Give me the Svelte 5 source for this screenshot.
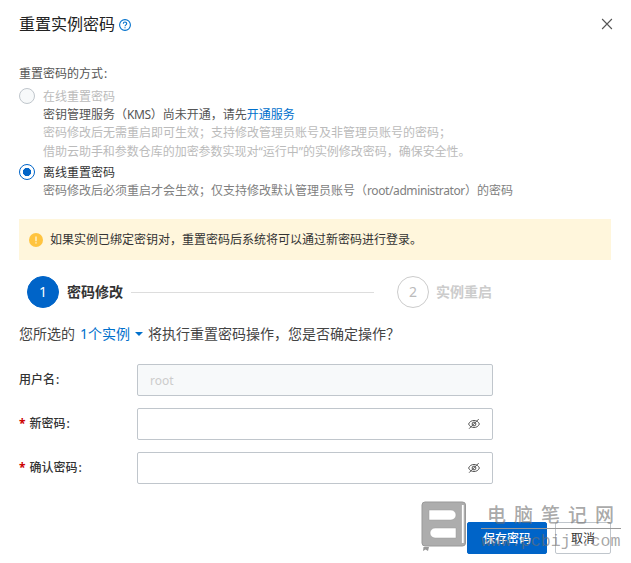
<script lang="ts">
    let mode = 'offline';
    let username = 'root';
    let password = '';
    let confirmPassword = '';
</script>

<main class="dialog">
    <header>
        <h1>重置实例密码</h1>
        <svg class="help" viewBox="0 0 12 12" width="12" height="12">
            <circle cx="6" cy="6" r="5.4" />
            <path d="M4.3 4.8C4.3 2.5 7.7 2.5 7.7 4.7C7.7 5.9 6 5.9 6 7.3M6 8.3V9.3" />
        </svg>
        <svg class="close" viewBox="0 0 12 12" width="12" height="12">
            <path d="M1.1 1L10.9 11M10.9 1L1.1 11" />
        </svg>
    </header>

    <section class="methods">
        <div class="caption">重置密码的方式<span class="colon">:</span></div>
        <div class="method">
            <span class="radio disabled"></span>
            <div class="method-text">
                <div class="muted">在线重置密码</div>
                <div>密钥管理服务（<span class="latin">KMS</span>）尚未开通，请先<span class="link">开通服务</span></div>
                <div class="muted">密码修改后无需重启即可生效；支持修改管理员账号及非管理员账号的密码；</div>
                <div class="muted quoted">借助云助手和参数仓库的加密参数实现对“运行中”的实例修改密码，确保安全性。</div>
            </div>
        </div>
        <div class="method offline">
            <span class="radio" class:checked={mode === 'offline'}></span>
            <div class="method-text">
                <div class="label">离线重置密码</div>
                <div class="hint">密码修改后必须重启才会生效；仅支持修改默认管理员账号（<span class="latin">root/administrator</span>）的密码</div>
            </div>
        </div>
    </section>

    <div class="notice">
        <svg viewBox="0 0 14 14" width="14" height="14">
            <circle cx="7" cy="7" r="7" fill="#ffc440" />
            <path d="M7 3.4V8.2M7 9.3V10.6" stroke="#fff6dc" stroke-width="1.3" />
        </svg>
        <span>如果实例已绑定密钥对，重置密码后系统将可以通过新密码进行登录。</span>
    </div>

    <div class="steps">
        <span class="number active">1</span>
        <span class="step-title">密码修改</span>
        <span class="step-line"></span>
        <span class="number">2</span>
        <span class="step-title waiting">实例重启</span>
    </div>

    <div class="question">
        <span>您所选的</span>
        <span class="link instances">1个实例</span>
        <span class="arrow"></span>
        <span>将执行重置密码操作，您是否确定操作？</span>
    </div>

    <form>
        <div class="field">
            <span class="field-label">用户名<span class="colon">:</span></span>
            <div class="control readonly"><input value={username} disabled /></div>
        </div>
        <div class="field">
            <span class="field-label"><span class="required">*</span>新密码<span class="colon">:</span></span>
            <div class="control">
                <input type="password" bind:value={password} />
                {@render eye()}
            </div>
        </div>
        <div class="field">
            <span class="field-label"><span class="required">*</span>确认密码<span class="colon">:</span></span>
            <div class="control">
                <input type="password" bind:value={confirmPassword} />
                {@render eye()}
            </div>
        </div>
    </form>

    <footer>
        <button class="primary">保存密码</button>
        <button>取消</button>
    </footer>

    <div class="watermark">
        <svg viewBox="0 0 46 51" width="46" height="51">
            <rect x="1" y="1" width="43.5" height="44" rx="3" fill="#adadad" stroke="#999" />
            <path d="M8 9H30A5 5 0 0 1 30 19H8ZM35 27V37H14A5 5 0 0 1 14 27Z" fill="#fff" stroke="#999" stroke-width=".5" />
            <path d="M41.8 4V42" stroke="#fff" stroke-width="1.8" />
            <path d="M2.5 46H8L7 50L4.5 48.5L2 50Z" fill="#999" />
        </svg>
        <div class="watermark-text">
            <div class="site-name">电脑笔记网</div>
            <div class="site-url">www.pcbiji.com</div>
        </div>
    </div>
</main>

{#snippet eye()}
    <svg class="eye" viewBox="0 0 12 12" width="12" height="12">
        <path d="M.6 6C2.4 1.3 9.6 1.3 11.4 6C9.6 10.7 2.4 10.7 .6 6Z" />
        <circle cx="6" cy="6" r="1.9" />
        <path d="M1.1 10.7L10.7 1.1" />
    </svg>
{/snippet}

<style>
    :global(body) {
        margin: 0;
        background: #fff;
    }

    .dialog {
        position: relative;
        box-sizing: border-box;
        width: 631px;
        height: 563px;
        padding: 12px 20px 0 19px;
        overflow: hidden;
        color: #555;
        font: 12px/18px "Noto Sans", "Noto Sans CJK SC", sans-serif;
    }

    header {
        display: flex;
        align-items: center;
        height: 24px;
    }

    h1 {
        margin: 0 4px 0 0;
        color: #222;
        font-size: 16px;
        font-weight: 400;
        line-height: 24px;
    }

    .help, .close, .eye {
        fill: none;
        stroke: #555;
    }

    .help {
        margin-top: 2px;
        stroke: #0070cc;
        stroke-width: 1.1;
    }

    .close {
        margin-left: auto;
        margin-right: -2px;
        stroke-width: 1.1;
    }

    .methods {
        margin-top: 29px;
    }

    .caption {
        height: 23px;
    }

    .method {
        display: flex;
        gap: 8px;
    }

    .method-text {
        white-space: nowrap;
        line-height: 18.2px;
    }

    .latin {
        letter-spacing: -.4px;
    }

    .quoted {
        letter-spacing: -.03px;
    }

    .offline {
        margin-top: 3px;
    }

    .radio {
        box-sizing: border-box;
        width: 16px;
        height: 16px;
        border: 1px solid #c0c6cc;
        border-radius: 50%;
        background: #fff;
    }

    .radio.disabled {
        background: #f7f9fa;
    }

    .radio.checked {
        border-color: #0064c8;
        background: radial-gradient(circle, #0064c8 3.8px, #fff 4.4px);
    }

    .muted {
        color: #bbb;
    }

    .hint {
        color: #808080;
    }

    .label {
        color: #333;
    }

    .link {
        color: #0070cc;
    }

    .notice {
        display: flex;
        align-items: center;
        gap: 7px;
        box-sizing: border-box;
        width: 592px;
        height: 41px;
        margin-top: 19px;
        padding-left: 10px;
        background: #fff6dc;
        color: #333;
    }

    .steps {
        display: flex;
        align-items: center;
        height: 32px;
        margin: 16px 0 0 8px;
    }

    .number {
        box-sizing: border-box;
        width: 32px;
        height: 32px;
        border: 1px solid #ccc;
        border-radius: 50%;
        color: #bbb;
        font-size: 14px;
        line-height: 30px;
        text-align: center;
    }

    .number.active {
        border-color: #0064c8;
        background: #0064c8;
        color: #fff;
    }

    .step-title {
        margin-left: 8px;
        color: #333;
        font-size: 14px;
        font-weight: 700;
    }

    .step-title.waiting {
        margin-left: 7px;
        color: #ccc;
    }

    .step-line {
        width: 243px;
        height: 1px;
        margin: 1px 23px 0 8px;
        background: #ddd;
    }

    .question {
        display: flex;
        align-items: center;
        height: 20px;
        margin-top: 16px;
        color: #444;
        font-size: 14px;
        white-space: nowrap;
    }

    .instances {
        margin: 0 5px;
    }

    .arrow {
        margin-right: 5px;
        border: 4px solid transparent;
        border-top: 4px solid #0070cc;
        border-bottom: 0;
    }

    form {
        display: grid;
        gap: 12px;
        margin-top: 20px;
    }

    .field {
        display: flex;
    }

    .field-label {
        width: 118px;
        color: #333;
        font-weight: 500;
        line-height: 32px;
    }

    .colon {
        margin-left: 1px;
    }

    .required {
        margin-right: 4px;
        color: #c00;
        font-weight: 700;
    }

    .control {
        display: flex;
        align-items: center;
        box-sizing: border-box;
        width: 356px;
        height: 32px;
        padding: 0 12px;
        border: 1px solid #c0c6cc;
        border-radius: 2px;
    }

    .readonly {
        background: #f7f9fa;
    }

    input {
        flex: 1;
        min-width: 0;
        padding: 1px 0 0;
        border: 0;
        background: none;
        color: #ccc;
        font: inherit;
    }

    footer {
        display: flex;
        justify-content: flex-end;
        gap: 8px;
        margin-top: 38px;
    }

    button {
        box-sizing: border-box;
        width: 56px;
        height: 32px;
        padding: 1px 0 0;
        border: 1px solid #c0c6cc;
        border-radius: 2px;
        background: #fff;
        color: #333;
        font: inherit;
    }

    .primary {
        width: 80px;
        border-color: #0064c8;
        background: #0064c8;
        color: #fff;
        font-weight: 500;
    }

    /* site mark stamped over the buttons */
    .watermark {
        position: absolute;
        top: 501px;
        left: 421px;
        display: flex;
        pointer-events: none;
    }

    .watermark-text {
        width: 140px;
        margin-left: 14px;
        color: rgba(112, 112, 112, .62);
        white-space: nowrap;
    }

    .site-name {
        height: 27px;
        padding-left: 6px;
        border-bottom: 1px solid #999;
        font-size: 19px;
        font-weight: 500;
        letter-spacing: 8px;
        line-height: 28px;
    }

    .site-url {
        font-family: "Liberation Mono", monospace;
        font-size: 16.6px;
        line-height: 25px;
    }
</style>
